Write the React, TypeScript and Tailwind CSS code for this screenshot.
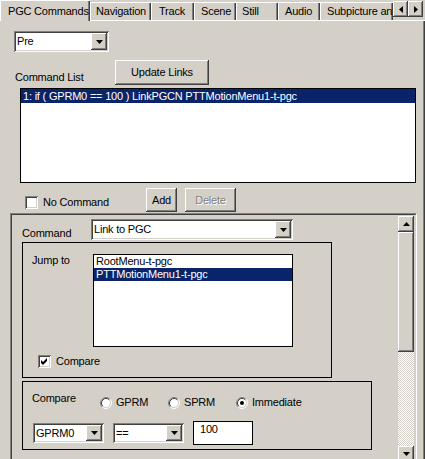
import React from "react"

const raised =
  "shadow-[inset_-1px_-1px_#404040,inset_1px_1px_#ffffff,inset_-2px_-2px_#808080,inset_2px_2px_#d4d0c8]"
const sunken =
  "shadow-[inset_1px_1px_#808080,inset_-1px_-1px_#ffffff,inset_2px_2px_#404040,inset_-2px_-2px_#d4d0c8]"

function DownArrow() {
  return (
    <svg width="7" height="4" viewBox="0 0 7 4">
      <polygon points="0,0 7,0 3.5,4" fill="#000" />
    </svg>
  )
}

function Combo({ value, className }: { value: string; className: string }) {
  return (
    <div className={`flex shrink-0 items-stretch bg-white p-[2px] ${sunken} ${className}`}>
      <div className="flex flex-1 items-center pl-[1px] leading-[13px] whitespace-nowrap">{value}</div>
      <div className={`flex w-[16px] items-center justify-center bg-[#d4d0c8] ${raised}`}>
        <DownArrow />
      </div>
    </div>
  )
}

function Button({ label, disabled, className }: { label: string; disabled?: boolean; className: string }) {
  return (
    <div className={`flex shrink-0 items-center justify-center bg-[#d4d0c8] ${raised} ${className}`}>
      <span className={disabled ? "text-[#808080] [text-shadow:1px_1px_#ffffff]" : ""}>{label}</span>
    </div>
  )
}

function Checkbox({ checked }: { checked?: boolean }) {
  return (
    <div className={`h-[13px] w-[13px] shrink-0 bg-white ${sunken}`}>
      {checked && (
        <svg width="13" height="13" viewBox="0 0 13 13">
          <path d="M3 5 L5 7 L9 3 L9 6 L5 10 L3 8 Z" fill="#000" />
        </svg>
      )}
    </div>
  )
}

function Radio({ label, checked }: { label: string; checked?: boolean }) {
  return (
    <div className="flex w-[68px] items-center">
      <svg width="12" height="12" viewBox="0 0 12 12">
        <circle cx="6" cy="6" r="4.5" fill="#fff" />
        <path d="M2.11 9.89 A5.5 5.5 0 0 1 9.89 2.11" stroke="#808080" fill="none" />
        <path d="M9.89 2.11 A5.5 5.5 0 0 1 2.11 9.89" stroke="#ffffff" fill="none" />
        <path d="M2.82 9.18 A4.5 4.5 0 0 1 9.18 2.82" stroke="#404040" fill="none" />
        <path d="M9.18 2.82 A4.5 4.5 0 0 1 2.82 9.18" stroke="#d4d0c8" fill="none" />
        {checked && <circle cx="6" cy="6" r="2" fill="#000" />}
      </svg>
      <span className="ml-[4px] leading-[13px]">{label}</span>
    </div>
  )
}

function Tab({ label, className }: { label: string; className: string }) {
  return (
    <div
      className={`mt-[2px] flex h-[18px] shrink-0 items-center overflow-hidden border-t border-l border-white pl-[5px] whitespace-nowrap shadow-[inset_-1px_0_#404040,inset_-2px_0_#808080] ${className}`}
    >
      {label}
    </div>
  )
}

export default function App() {
  return (
    <div className="h-[459px] w-[425px] overflow-hidden bg-[#d4d0c8] font-['Liberation_Sans',Arial,sans-serif] text-[11px] tracking-[-0.2px] text-black">
      {/* tab strip */}
      <div className="relative z-10 flex h-[20px]">
        <div className="flex h-[21px] w-[90px] shrink-0 items-center border-t border-l border-white bg-[#d4d0c8] pl-[7px] whitespace-nowrap shadow-[inset_-1px_0_#404040,inset_-2px_0_#808080]">
          PGC Commands
        </div>
        <Tab label="Navigation" className="w-[61px]" />
        <Tab label="Track" className="w-[43px] pl-[7px]" />
        <Tab label="Scene" className="w-[42px] pl-[6px]" />
        <Tab label="Still" className="w-[42px]" />
        <Tab label="Audio" className="w-[42px] pl-[6px]" />
        <Tab label="Subpicture an" className="w-[73px] pl-[6px]" />
        <div className="mt-[1px] flex">
          <div className={`flex h-[16px] w-[15px] items-center justify-center ${raised}`}>
            <svg width="4" height="7" viewBox="0 0 4 7">
              <polygon points="4,0 4,7 0,3.5" fill="#000" />
            </svg>
          </div>
          <div className={`flex h-[16px] w-[15px] items-center justify-center ${raised}`}>
            <svg width="4" height="7" viewBox="0 0 4 7">
              <polygon points="0,0 0,7 4,3.5" fill="#000" />
            </svg>
          </div>
        </div>
      </div>

      {/* tab page */}
      <div className="h-[439px] w-[425px] overflow-hidden border-t border-white pt-[10px] shadow-[inset_-1px_0_#404040,inset_-2px_0_#808080]">
        <Combo value="Pre" className="ml-[14px] h-[21px] w-[95px]" />

        <div className="mt-[8px] flex items-end">
          <span className="mb-[1px] ml-[15px] w-[100px] leading-[13px] whitespace-nowrap">Command List</span>
          <Button label="Update Links" className="h-[25px] w-[94px]" />
        </div>

        <div className="mt-[3px] ml-[20px] h-[95px] w-[396px] border border-black bg-white">
          <div className="h-[14px] bg-[#0a246a] pl-[2px] leading-[14px] whitespace-nowrap text-white">
            1: if ( GPRM0 == 100 ) LinkPGCN PTTMotionMenu1-t-pgc
          </div>
        </div>

        <div className="mt-[5px] flex items-start">
          <div className="mt-[8px] ml-[25px] flex w-[121px] shrink-0 items-center">
            <Checkbox />
            <span className="ml-[5px] leading-[13px] whitespace-nowrap">No Command</span>
          </div>
          <Button label="Add" className="h-[24px] w-[31px]" />
          <Button label="Delete" disabled className="ml-[8px] h-[24px] w-[51px]" />
        </div>

        {/* scrolling command editor */}
        <div className="mt-[1px] ml-[10px] h-[260px] w-[407px] border border-t-[#808080] border-r-white border-b-white border-l-[#808080]">
          <div className="flex h-full border border-t-[#404040] border-r-[#d4d0c8] border-b-[#d4d0c8] border-l-[#404040]">
            <div className="min-w-0 flex-1">
              <div className="mt-[4px] flex items-end">
                <span className="ml-[10px] w-[69px] shrink-0 leading-[13px]">Command</span>
                <Combo value="Link to PGC" className="h-[21px] w-[202px]" />
              </div>

              <div className="mt-[2px] ml-[10px] h-[136px] w-[310px] border border-black">
                <div className="mt-[11px] flex items-start">
                  <span className="ml-[9px] w-[61px] shrink-0 leading-[13px] whitespace-nowrap">Jump to</span>
                  <div className="h-[93px] w-[200px] shrink-0 border border-black bg-white">
                    <div className="h-[13px] pl-[2px] leading-[13px]">RootMenu-t-pgc</div>
                    <div className="h-[13px] bg-[#0a246a] pl-[2px] leading-[13px] text-white">PTTMotionMenu1-t-pgc</div>
                  </div>
                </div>
                <div className="mt-[8px] ml-[15px] flex items-center">
                  <Checkbox checked />
                  <span className="ml-[5px] leading-[13px]">Compare</span>
                </div>
              </div>

              <div className="mt-[3px] ml-[10px] h-[69px] w-[350px] border border-black">
                <div className="mt-[10px] flex items-start">
                  <span className="ml-[9px] w-[68px] shrink-0 leading-[13px]">Compare</span>
                  <div className="mt-[4px] flex">
                    <Radio label="GPRM" />
                    <Radio label="SPRM" />
                    <Radio label="Immediate" checked />
                  </div>
                </div>
                <div className="mt-[12px] flex items-start">
                  <Combo value="GPRM0" className="mt-[2px] ml-[10px] h-[20px] w-[71px]" />
                  <Combo value="==" className="mt-[2px] ml-[9px] h-[20px] w-[71px]" />
                  <div className="ml-[9px] h-[24px] w-[60px] shrink-0 border border-black bg-white pt-[1px] pl-[6px] leading-[13px]">
                    100
                  </div>
                </div>
              </div>
            </div>

            {/* vertical scrollbar */}
            <div className="mt-[1px] mr-[1px] flex w-[16px] shrink-0 flex-col">
              <div className={`flex h-[16px] shrink-0 items-center justify-center bg-[#d4d0c8] ${raised}`}>
                <svg width="7" height="4" viewBox="0 0 7 4">
                  <polygon points="0,4 7,4 3.5,0" fill="#000" />
                </svg>
              </div>
              <div className={`h-[120px] shrink-0 bg-[#d4d0c8] ${raised}`} />
              <div className="h-[94px] shrink-0 bg-[repeating-conic-gradient(#ffffff_0_25%,#d4d0c8_0_50%)] bg-[length:2px_2px]" />
              <div className={`flex h-[16px] shrink-0 items-center justify-center bg-[#d4d0c8] ${raised}`}>
                <DownArrow />
              </div>
            </div>
          </div>
        </div>
      </div>
    </div>
  )
}
